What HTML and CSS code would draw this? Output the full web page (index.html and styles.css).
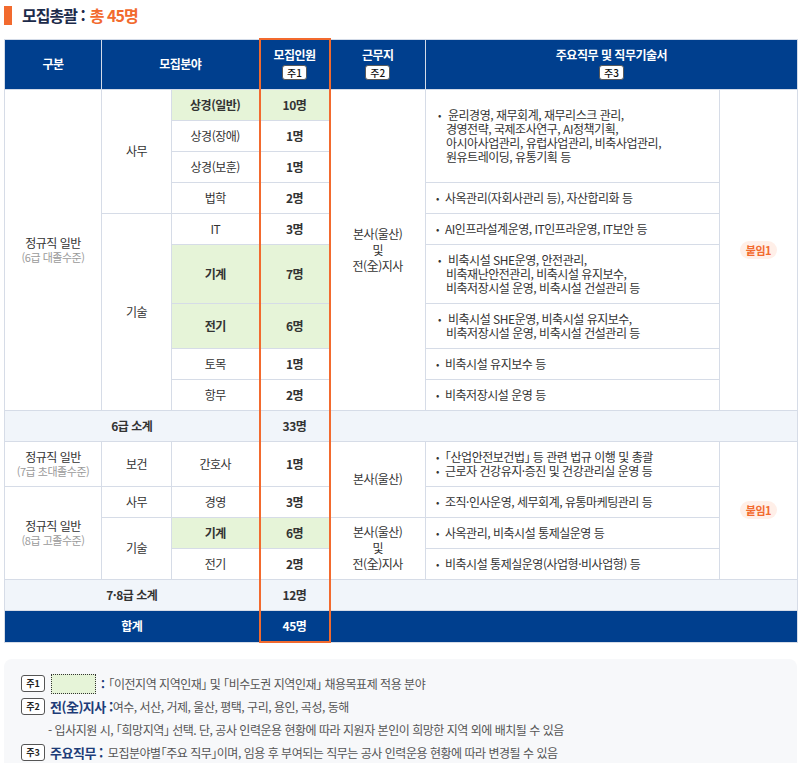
FILE: index.html
```html
<!DOCTYPE html>
<html lang="ko">
<head>
<meta charset="utf-8">
<title>모집총괄</title>
<link rel="stylesheet" href="styles.css">
</head>
<body>
<div class="page">
  <h2 class="title"><span class="title-bar"></span><span class="title-main">모집총괄 :</span><span class="title-accent">총 45명</span></h2>

  <table class="recruit">
    <colgroup>
      <col class="c1"><col class="c2"><col class="c3"><col class="c4"><col class="c5"><col class="c6"><col class="c7">
    </colgroup>
    <thead>
      <tr>
        <th>구분</th>
        <th colspan="2">모집분야</th>
        <th class="hl hl-top">모집인원<span class="note">주1</span></th>
        <th>근무지<span class="note">주2</span></th>
        <th colspan="2">주요직무 및 직무기술서<span class="note">주3</span></th>
      </tr>
    </thead>
    <tbody>
      <tr>
        <td rowspan="9" class="grade">정규직 일반<span class="sub">(6급 대졸수준)</span></td>
        <td rowspan="4">사무</td>
        <td class="green">상경(일반)</td>
        <td class="hl green b">10명</td>
        <td rowspan="9" class="place">본사(울산)<br>및<br>전(全)지사</td>
        <td rowspan="3" class="desc"><ul class="items wide"><li>윤리경영, 재무회계, 재무리스크 관리,<br>경영전략, 국제조사연구, AI정책기획,<br>아시아사업관리, 유럽사업관리, 비축사업관리,<br>원유트레이딩, 유통기획 등</li></ul></td>
        <td rowspan="9"><span class="att">붙임1</span></td>
      </tr>
      <tr>
        <td>상경(장애)</td>
        <td class="hl b">1명</td>
      </tr>
      <tr>
        <td>상경(보훈)</td>
        <td class="hl b">1명</td>
      </tr>
      <tr>
        <td>법학</td>
        <td class="hl b">2명</td>
        <td class="desc"><ul class="items"><li>사옥관리(자회사관리 등), 자산합리화 등</li></ul></td>
      </tr>
      <tr>
        <td rowspan="5">기술</td>
        <td>IT</td>
        <td class="hl b">3명</td>
        <td class="desc"><ul class="items"><li>AI인프라설계운영, IT인프라운영, IT보안 등</li></ul></td>
      </tr>
      <tr>
        <td class="green">기계</td>
        <td class="hl green b">7명</td>
        <td class="desc"><ul class="items wide"><li>비축시설 SHE운영, 안전관리,<br>비축재난안전관리, 비축시설 유지보수,<br>비축저장시설 운영, 비축시설 건설관리 등</li></ul></td>
      </tr>
      <tr>
        <td class="green">전기</td>
        <td class="hl green b">6명</td>
        <td class="desc"><ul class="items wide"><li>비축시설 SHE운영, 비축시설 유지보수,<br>비축저장시설 운영, 비축시설 건설관리 등</li></ul></td>
      </tr>
      <tr>
        <td>토목</td>
        <td class="hl b">1명</td>
        <td class="desc"><ul class="items"><li>비축시설 유지보수 등</li></ul></td>
      </tr>
      <tr>
        <td>항무</td>
        <td class="hl b">2명</td>
        <td class="desc"><ul class="items"><li>비축저장시설 운영 등</li></ul></td>
      </tr>
      <tr class="subtotal">
        <td colspan="3">6급 소계</td>
        <td class="hl">33명</td>
        <td colspan="3"></td>
      </tr>
      <tr>
        <td class="grade">정규직 일반<span class="sub">(7급 초대졸수준)</span></td>
        <td>보건</td>
        <td>간호사</td>
        <td class="hl b">1명</td>
        <td rowspan="2" class="place">본사(울산)</td>
        <td class="desc"><ul class="items"><li>「산업안전보건법」 등 관련 법규 이행 및 총괄</li><li>근로자 건강유지·증진 및 건강관리실 운영 등</li></ul></td>
        <td rowspan="4"><span class="att">붙임1</span></td>
      </tr>
      <tr>
        <td rowspan="3" class="grade">정규직 일반<span class="sub">(8급 고졸수준)</span></td>
        <td>사무</td>
        <td>경영</td>
        <td class="hl b">3명</td>
        <td class="desc"><ul class="items"><li>조직·인사운영, 세무회계, 유통마케팅관리 등</li></ul></td>
      </tr>
      <tr>
        <td rowspan="2">기술</td>
        <td class="green">기계</td>
        <td class="hl green b">6명</td>
        <td rowspan="2" class="place">본사(울산)<br>및<br>전(全)지사</td>
        <td class="desc"><ul class="items"><li>사옥관리, 비축시설 통제실운영 등</li></ul></td>
      </tr>
      <tr>
        <td>전기</td>
        <td class="hl b">2명</td>
        <td class="desc"><ul class="items"><li>비축시설 통제실운영(사업형·비사업형) 등</li></ul></td>
      </tr>
      <tr class="subtotal">
        <td colspan="3">7·8급 소계</td>
        <td class="hl">12명</td>
        <td colspan="3"></td>
      </tr>
      <tr class="total">
        <td colspan="3">합계</td>
        <td class="hl hl-bottom">45명</td>
        <td colspan="3"></td>
      </tr>
    </tbody>
  </table>

  <div class="notes">
    <div class="nline"><span class="nbadge">주1</span><span class="gbox"></span><span class="colon">:</span><span class="ntext">「이전지역 지역인재」 및 「비수도권 지역인재」 채용목표제 적용 분야</span></div>
    <div class="nline"><span class="nbadge">주2</span><span class="nkey">전(全)지사 :</span><span class="ntext">여수, 서산, 거제, 울산, 평택, 구리, 용인, 곡성, 동해</span></div>
    <div class="nline indent"><span class="ntext">- 입사지원 시, 「희망지역」 선택. 단, 공사 인력운용 현황에 따라 지원자 본인이 희망한 지역 외에 배치될 수 있음</span></div>
    <div class="nline"><span class="nbadge">주3</span><span class="nkey">주요직무 :</span><span class="ntext spaced">모집분야별「주요 직무」이며, 임용 후 부여되는 직무는 공사 인력운용 현황에 따라 변경될 수 있음</span></div>
  </div>
</div>
</body>
</html>
```

FILE: styles.css
```css
* { box-sizing: border-box; margin: 0; padding: 0; }

body {
  font-family: "Noto Sans CJK KR", "Noto Sans", sans-serif;
  color: #333;
  background: #fff;
}

.page {
  width: 799px;
  padding: 6px 2px 0 4px;
}

.title {
  display: flex;
  align-items: center;
  height: 19px;
  font-size: 16px;
  line-height: 19px;
  font-weight: 700;
  letter-spacing: -0.06em;
  color: #1c2b4a;
}

.title-bar {
  width: 8px;
  height: 19px;
  background: #f26a2e;
  margin-right: 10px;
}

.title-accent {
  color: #f26a2e;
  margin-left: 5px;
}

.recruit {
  margin-top: 13px;
  width: 793px;
  table-layout: fixed;
  border-collapse: collapse;
  font-size: 12px;
  line-height: 14px;
  letter-spacing: -0.04em;
  font-feature-settings: "halt";
}

.c1 { width: 97px; }
.c2 { width: 70px; }
.c3 { width: 88px; }
.c4 { width: 70px; }
.c5 { width: 96px; }
.c6 { width: 294px; }
.c7 { width: 78px; }

.recruit th {
  height: 50px;
  padding: 0;
  background: #003f8e;
  color: #fff;
  font-weight: 700;
  font-size: 12px;
  border: 1px solid #d3dbe8;
  vertical-align: middle;
  text-align: center;
}

.note {
  display: block;
  width: 25px;
  height: 15px;
  margin: 3px auto 0;
  background: #fff;
  border: 1px solid #5a5a5a;
  border-radius: 3px;
  color: #111;
  font-size: 10px;
  line-height: 13px;
  font-weight: 500;
  letter-spacing: 0;
}

.recruit td {
  height: 31px;
  border: 1px solid #d6dce7;
  padding: 0 4px;
  text-align: center;
  vertical-align: middle;
  color: #333;
}

.recruit td.hl,
.recruit th.hl {
  border-left: 2px solid #f26a2e;
  border-right: 2px solid #f26a2e;
}

.recruit th.hl-top { border-top: 2px solid #f26a2e; }
.recruit td.hl-bottom { border-bottom: 2px solid #f26a2e; }

.recruit td.green {
  background: #e6f4d8;
  font-weight: 700;
}

.recruit td.b { font-weight: 700; }

.grade .sub {
  display: block;
  color: #9a9a9a;
  font-size: 11px;
}

.place { line-height: 16px; }

.recruit td.desc {
  text-align: left;
  padding: 8px 10px;
}

.items { list-style: none; }

.items li { padding-left: 9px; }

.items.wide li { padding-left: 10px; }

.items li::before {
  content: "•";
  display: inline-block;
  vertical-align: top;
  width: 9px;
  margin-left: -9px;
  line-height: 14px;
  font-size: 10px;
}

.items.wide li::before {
  width: 10px;
  margin-left: -8px;
}

.att {
  display: inline-block;
  height: 18px;
  padding: 0 6px;
  line-height: 18px;
  border-radius: 9px;
  background: #ffefe8;
  color: #f26a2e;
  font-weight: 700;
  font-size: 11px;
}

.recruit tr.subtotal td {
  background: #f1f5fa;
  font-weight: 700;
}

.recruit tr.total td {
  height: 32px;
  background: #003f8e;
  color: #fff;
  font-weight: 700;
}

.notes {
  margin-top: 16px;
  width: 793px;
  background: #f7f8fa;
  border-radius: 8px;
  padding: 13px 17px 10px;
  font-size: 12px;
  color: #555;
  letter-spacing: -0.04em;
  font-feature-settings: "halt";
}

.nline {
  display: flex;
  align-items: center;
  height: 23px;
  white-space: nowrap;
}

.nbadge {
  display: flex;
  align-items: center;
  justify-content: center;
  width: 24px;
  height: 17px;
  margin-right: 5px;
  border: 1px solid #555;
  border-radius: 3px;
  background: #fff;
  font-size: 9px;
  font-weight: 700;
  color: #222;
  letter-spacing: 0;
}

.gbox {
  width: 45px;
  height: 20px;
  margin: 0 5px 0 1px;
  background: #e6f4d8;
  border: 1px dotted #333;
}

.colon {
  font-weight: 700;
  color: #1d3c78;
  margin-right: 4px;
}

.nkey {
  font-weight: 700;
  color: #1d3c78;
  font-size: 13px;
}

.spaced { margin-left: 5px; }

.indent { padding-left: 27px; }
```
